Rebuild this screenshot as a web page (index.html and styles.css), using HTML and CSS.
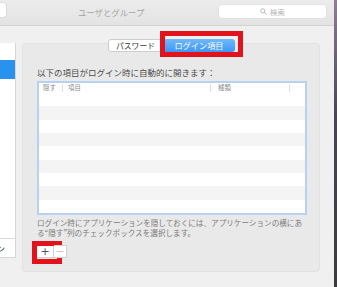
FILE: index.html
```html
<!DOCTYPE html>
<html lang="ja">
<head>
<meta charset="utf-8">
<link rel="stylesheet" href="styles.css">
</head>
<body>
<div class="screen">
  <div class="window">
    <div class="titlebar">
      <div class="navbtn"></div>
      <div class="title">ユーザとグループ</div>
      <div class="search">
        <svg width="7" height="7" viewBox="0 0 7 7"><circle cx="2.8" cy="2.8" r="2.1" fill="none" stroke="#aaa" stroke-width="0.8"/><path d="M4.3 4.3 L6.4 6.4" stroke="#aaa" stroke-width="0.9"/></svg>
        <span>検索</span>
      </div>
    </div>
    <div class="content">
      <div class="sidebar">
        <div class="list"><div class="sel"></div></div>
        <div class="opt">ログインオプション</div>
      </div>
      <div class="main">
        <div class="tabs">
          <div class="tab">パスワード</div>
          <div class="tab on">ログイン項目<span class="mark mark-tab"></span></div>
        </div>
        <div class="group">
          <div class="label">以下の項目がログイン時に自動的に開きます：</div>
          <div class="table">
            <div class="thead">
              <span class="col c1">隠す</span>
              <span class="col c2">項目</span>
              <span class="col c3">種類</span>
            </div>
            <div class="tbody"></div>
          </div>
          <p class="note">ログイン時にアプリケーションを隠しておくには、アプリケーションの横にあ<br>る“隠す”列のチェックボックスを選択します。</p>
          <div class="btns">
            <div class="btn plus">+<span class="mark mark-plus"></span></div>
            <div class="btn minus">−</div>
          </div>
        </div>
      </div>
    </div>
  </div>
  <div class="desk"></div>
</div>
</body>
</html>
```
FILE: styles.css
```css
html, body {
  margin: 0;
  padding: 0;
  background: #efefef;
}
body {
  font-family: "Noto Sans CJK JP", "Noto Sans", sans-serif;
}
.screen {
  width: 337px;
  height: 287px;
  display: flex;
  overflow: hidden;
}
.window {
  width: 334px;
  height: 287px;
  background: #f0f0f0;
  display: flex;
  flex-direction: column;
}
.desk {
  width: 3px;
  background: linear-gradient(#8c7f92, #4a4550 40%, #3c3a40);
}
.titlebar {
  height: 25px;
  border-bottom: 1px solid #d2d2d2;
  background: linear-gradient(#ececec, #e3e3e3);
  display: flex;
  align-items: flex-start;
}
.navbtn {
  width: 16px;
  height: 14px;
  margin-left: -10px;
  margin-top: 3px;
  background: #fff;
  border-radius: 3px;
  box-shadow: 0 0 0 0.5px #d0d0d0;
}
.title {
  margin-left: 72px;
  margin-top: 6px;
  font-size: 8.4px;
  line-height: 12px;
  color: #a4a4a4;
  white-space: nowrap;
}
.search {
  margin-left: auto;
  margin-right: 8px;
  margin-top: 5px;
  width: 107px;
  height: 13px;
  background: #fff;
  border-radius: 3px;
  box-shadow: 0 0 0 0.5px #dcdcdc;
  display: flex;
  align-items: center;
  justify-content: center;
  gap: 3px;
  font-size: 7.4px;
  color: #b4b4b4;
}
.content {
  flex: 1;
  display: flex;
}
.sidebar {
  width: 16px;
  margin-top: 17px;
  display: flex;
  flex-direction: column;
}
.list {
  height: 196px;
  box-sizing: border-box;
  background: #fff;
  border-right: 1px solid #d6d6d6;
  border-bottom: 1px solid #dadada;
  padding-top: 17px;
}
.sel {
  height: 19px;
  background: #2892ee;
}
.opt {
  height: 19px;
  box-sizing: border-box;
  background: #fff;
  border-right: 1px solid #d6d6d6;
  border-bottom: 1px solid #d6d6d6;
  display: flex;
  justify-content: flex-end;
  align-items: center;
  overflow: hidden;
  white-space: nowrap;
  padding-right: 10px;
  font-size: 8px;
  color: #333;
}
.main {
  margin-left: 6px;
  width: 298px;
  display: flex;
  flex-direction: column;
}
.tabs {
  margin-top: 13px;
  margin-left: 86px;
  align-self: flex-start;
  display: flex;
  height: 13px;
  position: relative;
  z-index: 1;
}
.tab {
  width: 55px;
  height: 13px;
  box-sizing: border-box;
  background: #fff;
  border: 0.5px solid #cdcdcd;
  border-radius: 3px 0 0 3px;
  font-size: 7.8px;
  line-height: 12px;
  text-align: center;
  color: #3a3a3a;
  position: relative;
}
.tab.on {
  width: 72px;
  border: none;
  border-radius: 3px;
  background: linear-gradient(#71b8fa, #3b97f6);
  color: #fff;
  font-size: 8.2px;
  line-height: 13px;
}
.mark {
  position: absolute;
  box-sizing: border-box;
  border: 5px solid #e3131c;
}
.mark-tab {
  left: -3px;
  top: -8px;
  width: 83px;
  height: 26px;
}
.group {
  margin-top: -9px;
  height: 229px;
  box-sizing: border-box;
  background: #e9e9e9;
  border: 1px solid #e1e1e1;
  border-radius: 4px;
  padding-left: 14px;
  display: flex;
  flex-direction: column;
}
.label {
  margin-top: 22px;
  font-size: 8.5px;
  line-height: 12px;
  color: #4c4c4c;
  white-space: nowrap;
}
.table {
  margin-top: 3px;
  width: 270px;
  height: 134px;
  box-sizing: border-box;
  border: 2px solid #b6d2f2;
  background: #fff;
}
.thead {
  height: 10px;
  display: flex;
  align-items: center;
  font-size: 6.4px;
  color: #8a8a8a;
}
.col {
  height: 8px;
  line-height: 8px;
  box-sizing: border-box;
  border-right: 1px solid #dedede;
  white-space: nowrap;
}
.c1 { width: 24px; padding-left: 4px; }
.c2 { width: 148px; padding-left: 5px; }
.c3 { width: 79px; padding-left: 7px; }
.tbody {
  height: 120px;
  background: repeating-linear-gradient(#fff 0 13.333px, #f4f4f4 13.333px 26.667px);
}
.note {
  margin: 3px 0 0;
  font-size: 7.6px;
  line-height: 10px;
  color: #7b7b7b;
  white-space: nowrap;
}
.btns {
  margin-top: 7px;
  margin-left: -1px;
  display: flex;
}
.btn {
  height: 13px;
  box-sizing: border-box;
  background: #fff;
  border: 1px solid #d2d2d2;
  display: flex;
  align-items: center;
  justify-content: center;
  font-family: "DejaVu Sans", sans-serif;
  font-size: 11px;
  line-height: 11px;
  position: relative;
}
.plus {
  width: 18px;
  color: #555;
}
.minus {
  width: 13px;
  color: #c8c8c8;
  border-left: none;
}
.mark-plus {
  left: -5px;
  top: -5px;
  width: 30px;
  height: 23px;
}
```
